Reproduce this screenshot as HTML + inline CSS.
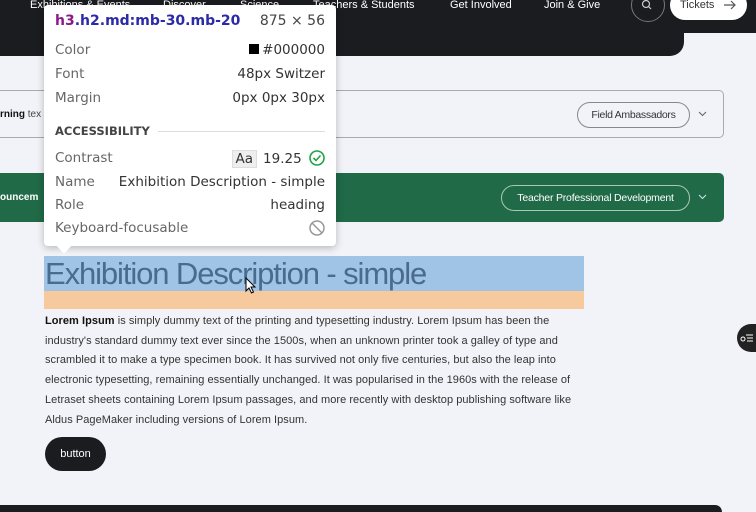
<!DOCTYPE html>
<html><head><style>
*{margin:0;padding:0;box-sizing:border-box}
html,body{width:756px;height:512px;overflow:hidden}
body{background:#f2f3f8;font-family:"Liberation Sans",sans-serif;position:relative}
.abs{position:absolute}
.nav{color:#fff;font-size:11px;top:-1px;white-space:nowrap}
.tt{left:44px;top:5px;width:292px;height:241px;background:#fff;border-radius:4px;box-shadow:0 2px 8px rgba(0,0,0,.25);font-family:"DejaVu Sans","Liberation Sans",sans-serif;font-size:13.5px;color:#666}
.row{position:absolute;left:11px;right:11px;display:flex;justify-content:space-between;white-space:nowrap}
.row span:last-child{color:#333}
.p{font-size:11px;color:#333;left:45px;top:312px;line-height:19.7px;white-space:nowrap;letter-spacing:0.05px}
</style></head><body>
<div class="abs" style="left:0;top:0;width:756px;height:33px;background:#1b1c20"></div>
<div class="abs" style="left:0;top:0;width:684px;height:56px;background:#1b1c20;border-bottom-right-radius:14px"></div>
<div class="abs nav" style="left:30px">Exhibitions &amp; Events</div>
<div class="abs nav" style="left:163px">Discover</div>
<div class="abs nav" style="left:240px">Science</div>
<div class="abs nav" style="left:313px">Teachers &amp; Students</div>
<div class="abs nav" style="left:450px">Get Involved</div>
<div class="abs nav" style="left:544px">Join &amp; Give</div>
<div class="abs" style="left:631px;top:-12px;width:34px;height:34px;border:1px solid #777;border-radius:50%"></div>
<svg class="abs" style="left:641px;top:0" width="12" height="12"><circle cx="5" cy="4" r="3.5" fill="none" stroke="#ccc" stroke-width="1.2"/><path d="M7.5 6.5L10 9" stroke="#ccc" stroke-width="1.2"/></svg>
<div class="abs" style="left:670px;top:-10px;width:77px;height:30px;background:#fff;border-radius:15px"></div>
<div class="abs" style="left:680px;top:-1px;font-size:11px;color:#333">Tickets</div>
<svg class="abs" style="left:723px;top:0" width="14" height="12"><path d="M1 5h11M8 1l4 4-4 4" fill="none" stroke="#555" stroke-width="1.2"/></svg>

<div class="abs" style="left:-10px;top:90px;width:734px;height:48px;border:1px solid #aaa;border-radius:5px"></div>
<div class="abs" style="left:0;top:109px;font-size:10px;color:#111"><b>rning</b> <span style="color:#444">tex</span></div>
<div class="abs" style="left:577px;top:102px;width:113px;height:26px;border:1px solid #888;border-radius:13px;font-size:10.5px;color:#333;text-align:center;line-height:24px;letter-spacing:-0.3px">Field Ambassadors</div>
<svg class="abs" style="left:698px;top:111px" width="9" height="6"><path d="M1 1l3.5 3.5L8 1" fill="none" stroke="#666" stroke-width="1.1"/></svg>

<div class="abs" style="left:-10px;top:173px;width:734px;height:49px;background:#206a48;border-radius:5px"></div>
<div class="abs" style="left:0;top:192px;font-size:10px;color:#fff;font-weight:bold">ouncem</div>
<div class="abs" style="left:501px;top:185px;width:189px;height:26px;border:1px solid #a9c9b8;border-radius:13px;font-size:10.5px;color:#fff;text-align:center;line-height:24px;letter-spacing:-0.2px">Teacher Professional Development</div>
<svg class="abs" style="left:698px;top:194px" width="9" height="6"><path d="M1 1l3.5 3.5L8 1" fill="none" stroke="#cde" stroke-width="1.1"/></svg>

<div class="abs tt">
<div class="row" style="top:8px;font-size:14px"><span style="font-weight:bold;color:#2b2aa8"><span style="color:#8a1a8a">h3</span>.h2.md:mb-30.mb-20</span><span style="color:#444">875 × 56</span></div>
<div class="row" style="top:37px"><span>Color</span><span><span style="display:inline-block;width:10px;height:10px;background:#000;margin-right:3px"></span>#000000</span></div>
<div class="row" style="top:61px"><span>Font</span><span>48px Switzer</span></div>
<div class="row" style="top:85px"><span>Margin</span><span>0px 0px 30px</span></div>
<div class="row" style="top:119px;font-size:11.5px;font-weight:bold;color:#444;justify-content:flex-start;align-items:center"><span style="color:#444">ACCESSIBILITY</span><span style="flex:1;height:1px;background:#ddd;margin-left:8px"></span></div>
<div class="row" style="top:145px"><span>Contrast</span><span><span style="background:#eee;border:1px solid #ddd;padding:0 3px;margin-right:6px">Aa</span>19.25 <svg width="16" height="16" style="vertical-align:-3px;margin-left:3px"><circle cx="8" cy="8" r="7" fill="none" stroke="#1ea446" stroke-width="1.6"/><path d="M4.5 8l2.5 2.5 4.5-5" fill="none" stroke="#1ea446" stroke-width="1.6"/></svg></span></div>
<div class="row" style="top:169px"><span>Name</span><span>Exhibition Description - simple</span></div>
<div class="row" style="top:192px"><span>Role</span><span>heading</span></div>
<div class="row" style="top:215px"><span>Keyboard-focusable</span><span><svg width="16" height="16" style="vertical-align:-3px"><circle cx="8" cy="8" r="7" fill="none" stroke="#999" stroke-width="1.5"/><path d="M3 3l10 10" stroke="#999" stroke-width="1.5"/></svg></span></div>
</div>
<div class="abs" style="left:55px;top:244px;width:0;height:0;border-left:9px solid transparent;border-right:9px solid transparent;border-top:10px solid #fff"></div>

<div class="abs" style="left:44px;top:256px;width:540px;height:35px;background:#9fc4e6"></div>
<div class="abs" style="left:44px;top:291px;width:540px;height:18px;background:#f6ca9c"></div>
<div class="abs" style="left:45px;top:256px;font-size:31px;color:#4a6b8c;letter-spacing:-1.1px;white-space:nowrap;line-height:35px">Exhibition Description - simple</div>
<svg class="abs" style="left:245px;top:277px" width="12" height="18"><path d="M1 1v13l3-3 2.5 5 2-1-2.5-5h4z" fill="#fff" stroke="#000" stroke-width="1"/></svg>

<div class="abs p"><b style="color:#111">Lorem Ipsum</b> is simply dummy text of the printing and typesetting industry. Lorem Ipsum has been the<br>industry's standard dummy text ever since the 1500s, when an unknown printer took a galley of type and<br>scrambled it to make a type specimen book. It has survived not only five centuries, but also the leap into<br>electronic typesetting, remaining essentially unchanged. It was popularised in the 1960s with the release of<br>Letraset sheets containing Lorem Ipsum passages, and more recently with desktop publishing software like<br>Aldus PageMaker including versions of Lorem Ipsum.</div>
<div class="abs" style="left:45px;top:437px;width:61px;height:34px;background:#1b1c20;border-radius:17px;color:#fff;font-size:11px;text-align:center;line-height:34px">button</div>

<div class="abs" style="left:737px;top:324px;width:19px;height:28px;background:#222;border-radius:14px 0 0 14px"></div>
<svg class="abs" style="left:740px;top:332px" width="14" height="12"><circle cx="3" cy="7" r="2" fill="none" stroke="#fff"/><path d="M6 3h7M7 6h6M7 9h6" stroke="#fff"/></svg>
<div class="abs" style="left:0;top:505px;width:722px;height:7px;background:#1b1c20;border-top-right-radius:7px"></div>
</body></html>
